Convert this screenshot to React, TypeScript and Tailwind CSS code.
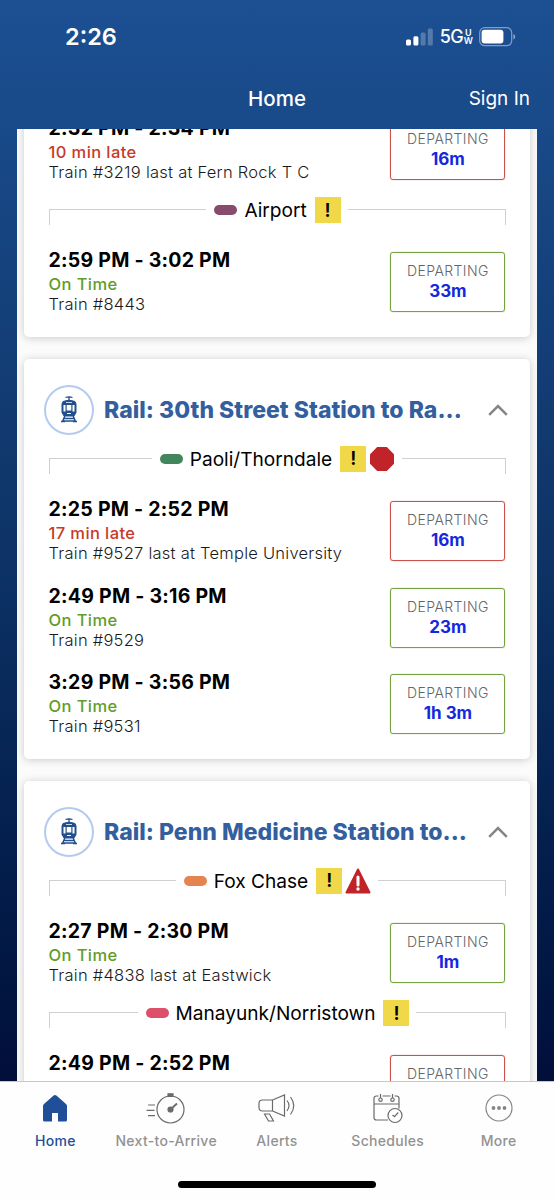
import React from "react";
import clsx from "clsx";

type Trip = {
  time: string;
  status: string;
  train?: string;
  departing?: string;
  late?: boolean;
};

type Route = {
  name: string;
  color: string;
  alert?: "stop" | "warning";
  trips: Trip[];
};

const airport: Route = {
  name: "Airport",
  color: "bg-[#874b6e]",
  trips: [
    { time: "2:59 PM - 3:02 PM", status: "On Time", train: "Train #8443", departing: "33m" },
  ],
};

const paoli: Route = {
  name: "Paoli/Thorndale",
  color: "bg-[#43855c]",
  alert: "stop",
  trips: [
    { time: "2:25 PM - 2:52 PM", status: "17 min late", train: "Train #9527 last at Temple University", departing: "16m", late: true },
    { time: "2:49 PM - 3:16 PM", status: "On Time", train: "Train #9529", departing: "23m" },
    { time: "3:29 PM - 3:56 PM", status: "On Time", train: "Train #9531", departing: "1h 3m" },
  ],
};

const foxChase: Route = {
  name: "Fox Chase",
  color: "bg-[#e4854f]",
  alert: "warning",
  trips: [
    { time: "2:27 PM - 2:30 PM", status: "On Time", train: "Train #4838 last at Eastwick", departing: "1m" },
  ],
};

const manayunk: Route = {
  name: "Manayunk/Norristown",
  color: "bg-[#dc5069]",
  trips: [{ time: "2:49 PM - 2:52 PM", status: "3 min late", late: true }],
};

function StatusBar() {
  return (
    <div className="flex h-[74px] items-center justify-between pl-[65px] pr-[38px] text-white">
      <span className="text-[23.5px] leading-6 font-semibold">2:26</span>
      <div className="flex items-center">
        <svg width="28" height="18" viewBox="0 0 28 18" fill="#fff">
          <rect x="0" y="11.5" width="5" height="6" rx="1.5" />
          <rect x="7.4" y="8.3" width="5" height="9.2" rx="1.5" />
          <rect x="14.6" y="4.5" width="5" height="13" rx="1.5" opacity=".25" />
          <rect x="21.8" y="0.5" width="5" height="17" rx="1.5" opacity=".25" />
        </svg>
        <span className="ml-[6px] text-[18px] leading-5 font-medium tracking-[-0.8px]">5G</span>
        <span className="ml-px flex flex-col items-center text-[9px] leading-[8.5px] font-semibold">
          <span>U</span>
          <span>W</span>
        </span>
        <svg className="ml-[6px]" width="37" height="20" viewBox="0 0 37 20" fill="none">
          <rect x="0.7" y="0.7" width="32" height="18" rx="5" stroke="#fff" strokeOpacity=".45" strokeWidth="1.2" />
          <rect x="2.6" y="2.8" width="21.8" height="13.8" rx="3" fill="#fff" />
          <path d="M34.4 7v5.6c1.1-.5 1.8-1.5 1.8-2.8S35.5 7.5 34.4 7z" fill="#fff" fillOpacity=".5" />
        </svg>
      </div>
    </div>
  );
}

function RailIcon() {
  return (
    <svg width="18" height="27" viewBox="0 0 18 27" fill="none" stroke="#234e8c">
      <path d="M5.5 1.5q3.5-1.4 7 0M9 1v4" strokeWidth="1.3" />
      <path d="M3 5.5Q9 2.8 15 5.5L16 8v8.5L14 20H4L2 16.5V8z" fill="#234e8c" strokeWidth="1" />
      <path d="M3.5 9h2v6.5h-2zM12.5 9h2v6.5h-2zM6.7 9h4.6v5.5H6.7zM6 6h6v.8H6z" fill="#fff" stroke="none" />
      <path d="M7 17.5h4" stroke="#fff" strokeWidth="1" />
      <path d="M4.8 20L2.3 26M13.2 20l2.5 6M3.5 22.6h11M1 25.5h4M13 25.5h4M3 25h12" strokeWidth="1.5" />
    </svg>
  );
}

function AlertBadge() {
  return (
    <span className="flex size-[26px] items-center justify-center bg-[#f1d849] text-[19px] leading-none font-semibold">
      !
    </span>
  );
}

function RouteHeading({ route }: { route: Route }) {
  return (
    <div className="mr-[24.5px] ml-[24.5px] flex h-[26px]">
      <div className="mt-[12px] h-4 flex-1 border-t border-l border-[#d0d0d0]" />
      <div className="flex items-center pr-[7px] pl-[8px]">
        <span className={clsx("h-[10px] w-[23px] rounded-full", route.color)} />
        <span className="ml-[7px] text-[19.1px] leading-6">{route.name}</span>
        <span className="ml-[8px]">
          <AlertBadge />
        </span>
        {route.alert === "stop" && (
          <svg className="ml-[3px]" width="26" height="26" viewBox="0 0 26 26">
            <path d="M8.2 1h9.6L25 8.2v9.6L17.8 25H8.2L1 17.8V8.2z" fill="#c02429" />
          </svg>
        )}
        {route.alert === "warning" && (
          <svg className="ml-[3px]" width="26" height="26" viewBox="0 0 26 26">
            <path d="M13 1.5L24.5 24.5h-23z" fill="#c02429" stroke="#c02429" strokeWidth="2" strokeLinejoin="round" />
            <path d="M13 9v8" stroke="#fff" strokeWidth="3" strokeLinecap="round" />
            <circle cx="13" cy="21" r="1.7" fill="#fff" />
          </svg>
        )}
      </div>
      <div className="mt-[12px] h-4 flex-1 border-t border-r border-[#d0d0d0]" />
    </div>
  );
}

function TripRow({ trip }: { trip: Trip }) {
  return (
    <div className="mr-[24.6px] ml-[24.5px] flex h-[60px] justify-between whitespace-nowrap">
      <div className="-mt-1">
        <p className="text-[19.5px] leading-6 font-bold tracking-[0.25px]">{trip.time}</p>
        <p className={clsx("text-[16.5px] leading-6 font-medium tracking-[0.4px]", trip.late ? "text-[#c73a28]" : "text-[#639c28]")}>
          {trip.status}
        </p>
        {trip.train && (
          <p className="text-[16.5px] leading-4 font-light tracking-[0.25px] text-[#1a1a1a]">{trip.train}</p>
        )}
      </div>
      <div
        className={clsx(
          "flex w-[115px] flex-col items-center rounded-[3px] border-[1.5px] pt-[8px] shadow-[0_0_1px]",
          trip.late ? "border-[#c9534a] shadow-[#c9534a]" : "border-[#75a241] shadow-[#75a241]"
        )}
      >
        <span className="text-[14px] leading-5 font-light tracking-[0.4px] text-[#666]">DEPARTING</span>
        {trip.departing && (
          <span className="text-[17px] leading-5 font-bold text-[#1428e0]">{trip.departing}</span>
        )}
      </div>
    </div>
  );
}

function CardTitle({ title }: { title: string }) {
  return (
    <div className="mt-[26px] mb-[11px] flex h-[50px] items-center pr-[22px] pl-5">
      <span className="flex size-[50px] items-center justify-center rounded-full border-2 border-[#b3cbef]">
        <RailIcon />
      </span>
      <h2 className="ml-[10px] flex-1 text-[23px] leading-8 font-extrabold tracking-[0.03px] whitespace-nowrap text-[#345f9f]">
        {title}
      </h2>
      <svg width="20" height="12" viewBox="0 0 20 12" fill="none" stroke="#858585" strokeWidth="2.5">
        <path d="M1.2 10.8L10 2l8.8 8.8" />
      </svg>
    </div>
  );
}

function Trips({ trips }: { trips: Trip[] }) {
  return (
    <div className="mt-[29px] flex flex-col gap-[26.7px]">
      {trips.map((trip) => (
        <TripRow key={trip.time} trip={trip} />
      ))}
    </div>
  );
}

const cardStyle = "mx-[7px] rounded-[5px] bg-white pb-[25.1px] shadow-[0_1px_8px_rgba(0,0,0,0.2)]";

const tabs = [
  { label: "Home", icon: <HomeIcon /> },
  { label: "Next-to-Arrive", icon: <ArriveIcon /> },
  { label: "Alerts", icon: <AlertsIcon /> },
  { label: "Schedules", icon: <SchedulesIcon /> },
  { label: "More", icon: <MoreIcon /> },
];

function HomeIcon() {
  return (
    <svg width="26" height="30" viewBox="0 0 26 30">
      <path d="M11.6 2.6q1.4-1.2 2.8 0L24 11q1 1 1 2.3V27q0 1.5-1.5 1.5H16V20h-6v8.5H2.5Q1 28.5 1 27V13.3Q1 12 2 11z" fill="#1f4f98" />
    </svg>
  );
}

function ArriveIcon() {
  return (
    <svg width="40" height="32" viewBox="0 0 40 32" fill="none" stroke="#6b6b6b" strokeWidth="1.2">
      <circle cx="24.5" cy="17.5" r="13.5" />
      <path d="M22 1.8h5v2.5h-5z" fill="#6b6b6b" />
      <path d="M2 13h7M.5 18.3h8M2 23.7h7" />
      <path d="M25 17l6-5.500" strokeWidth="1.8" />
      <circle cx="24.5" cy="17.5" r="2.5" fill="#6b6b6b" />
    </svg>
  );
}

function AlertsIcon() {
  return (
    <svg width="38" height="30" viewBox="0 0 38 30" fill="none" stroke="#6b6b6b" strokeWidth="1.2">
      <path d="M14.5 7h-10Q1 7 1 10.5v4Q1 18 4.5 18h10zM14.5 7l12-5v21l-12-5" />
      <path d="M6.5 21h5l4 7h-5z" />
      <path d="M29 7.5q4 5 0 10.5M32.5 4q6.5 8.5 0 17.5" />
    </svg>
  );
}

function SchedulesIcon() {
  return (
    <svg width="30" height="31" viewBox="0 0 30 31" fill="none" stroke="#6b6b6b" strokeWidth="1.2">
      <path d="M5.5 3h-2Q1 3 1 5.5v19Q1 27 3.5 27H15M9.5 3h8M21.5 3h2Q26 3 26 5.5v10M1 11h25" />
      <circle cx="7.5" cy="6.7" r="1.7" />
      <circle cx="19.5" cy="6.7" r="1.7" />
      <path d="M7.5 1v4M19.5 1v4" />
      <circle cx="22" cy="22.5" r="7" />
      <path d="M19.5 22l2 1.7 3.7-4.2" />
    </svg>
  );
}

function MoreIcon() {
  return (
    <svg width="28" height="28" viewBox="0 0 28 28" fill="#858585">
      <circle cx="14" cy="14" r="13" fill="none" stroke="#858585" strokeWidth="1.2" />
      <circle cx="8.5" cy="14" r="1.9" />
      <circle cx="14" cy="14" r="1.9" />
      <circle cx="19.5" cy="14" r="1.9" />
    </svg>
  );
}

function TabBar() {
  return (
    <nav className="flex h-[119px] flex-col items-center border-t border-[#c8c8c8] bg-[#fefefe]">
      <div className="grid w-full grid-cols-5">
        {tabs.map((tab, i) => (
          <div key={tab.label} className="flex flex-col items-center whitespace-nowrap">
            <span className="flex h-[53px] items-center pb-px">{tab.icon}</span>
            <span
              className={clsx(
                "text-[14px] leading-3 font-medium tracking-[0.3px]",
                i === 0 ? "text-[#1f4f98]" : "text-[#929292]"
              )}
            >
              {tab.label}
            </span>
          </div>
        ))}
      </div>
      <div className="mt-[34px] h-[7px] w-[198px] rounded-full bg-black" />
    </nav>
  );
}

export default function App() {
  return (
    <div className="flex h-[1200px] w-[554px] flex-col overflow-hidden bg-[#01103a] font-['Inter',sans-serif] text-black">
      <div className="flex min-h-0 flex-1 flex-col bg-linear-to-b from-[#1c5093] via-[#0e3467] via-50% to-[#010f3a]">
        <StatusBar />
        <header className="grid h-[55px] grid-cols-3 items-center pb-[4px] text-white">
          <h1 className="col-start-2 text-center text-[20.5px] font-medium">Home</h1>
          <span className="pr-6 text-right text-[19px]">Sign In</span>
        </header>

        <main className="mx-[17px] min-h-0 flex-1 overflow-hidden bg-[#fbfbfb]">
          <section className={clsx(cardStyle, "-mt-[35px] pt-[26.3px]")}>
            <TripRow
              trip={{ time: "2:32 PM - 2:34 PM", status: "10 min late", train: "Train #3219 last at Fern Rock T C", departing: "16m", late: true }}
            />
            <div className="h-[17px]" />
            <RouteHeading route={airport} />
            <Trips trips={airport.trips} />
          </section>

          <section className={clsx(cardStyle, "mt-[21.5px] flow-root")}>
            <CardTitle title="Rail: 30th Street Station to Ra..." />
            <RouteHeading route={paoli} />
            <Trips trips={paoli.trips} />
          </section>

          <section className={clsx(cardStyle, "mt-[21.5px] flow-root")}>
            <CardTitle title="Rail: Penn Medicine Station to..." />
            <RouteHeading route={foxChase} />
            <Trips trips={foxChase.trips} />
            <div className="h-[17.5px]" />
            <RouteHeading route={manayunk} />
            <Trips trips={manayunk.trips} />
          </section>
        </main>
      </div>
      <TabBar />
    </div>
  );
}
